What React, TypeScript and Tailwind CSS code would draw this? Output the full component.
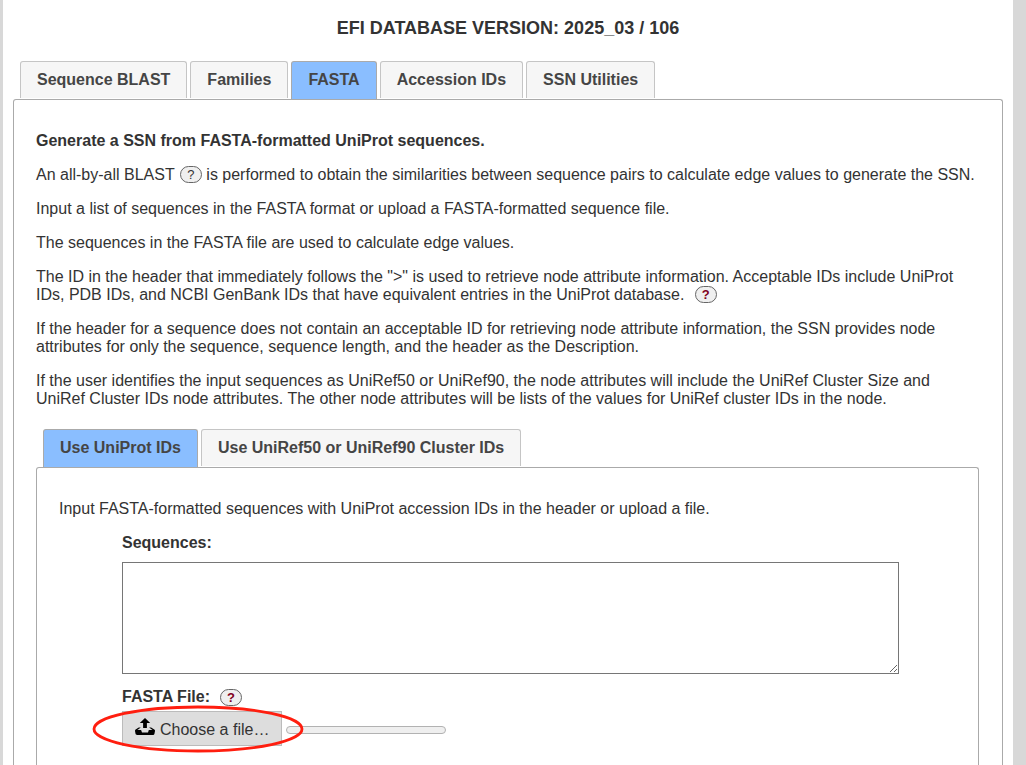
import { useState } from 'react';

const TABS = ['Sequence BLAST', 'Families', 'FASTA', 'Accession IDs', 'SSN Utilities'];
const ID_TABS = ['Use UniProt IDs', 'Use UniRef50 or UniRef90 Cluster IDs'];

interface TabBarProps {
  tabs: string[];
  active: string;
  onSelect: (tab: string) => void;
}

const TabBar = ({ tabs, active, onSelect }: TabBarProps) => (
  <div role="tablist" className="flex gap-[3px] pl-[7px]">
    {tabs.map((tab) => (
      <button
        key={tab}
        type="button"
        role="tab"
        aria-selected={tab === active}
        onClick={() => onSelect(tab)}
        className={`rounded-t-[3px] border border-b-0 px-4 pt-[9px] text-[#454545] font-bold ${
          tab === active ? 'border-[#aaaaaa] bg-[#8abeff] pb-[10px]' : 'mb-px border-[#c5c5c5] bg-[#f6f6f6] pb-[9px]'
        }`}
      >
        {tab}
      </button>
    ))}
  </div>
);

interface HelpProps {
  label: string;
  className: string;
}

const Help = ({ label, className }: HelpProps) => (
  <button
    type="button"
    aria-label={label}
    className={`inline-flex h-[17px] w-[22px] items-center justify-center rounded-full border border-[#666666] bg-[#efefef] align-text-bottom text-[13px] leading-none ${className}`}
  >
    ?
  </button>
);

const App = () => {
  const [tab, setTab] = useState('FASTA');
  const [idTab, setIdTab] = useState('Use UniProt IDs');
  const [sequences, setSequences] = useState('');

  return (
    <div className="min-h-screen bg-[#d8d8d8] pl-[3px] pr-[13px] font-['Liberation_Sans',Arial,sans-serif] text-base leading-[18px] text-[#333333]">
      <main className="flex min-h-screen flex-col bg-white px-[10px] pt-[18px]">
        <h1 className="mb-[23px] text-center text-[18px] leading-5 font-bold">EFI DATABASE VERSION: 2025_03 / 106</h1>

        <TabBar tabs={TABS} active={tab} onSelect={setTab} />

        <section className="flex flex-1 flex-col rounded-t-[3px] border border-b-0 border-[#aaaaaa] pr-[23px] pl-[22px] pt-8">
          <div className="space-y-4">
            <h2 className="font-bold">Generate a SSN from FASTA-formatted UniProt sequences.</h2>
            <p>
              An all-by-all BLAST <Help label="About all-by-all BLAST" className="ml-px text-[#333333]" /> is performed to
              obtain the similarities between sequence pairs to calculate edge values to generate the SSN.
            </p>
            <p>Input a list of sequences in the FASTA format or upload a FASTA-formatted sequence file.</p>
            <p>The sequences in the FASTA file are used to calculate edge values.</p>
            <p>
              The ID in the header that immediately follows the "&gt;" is used to retrieve node attribute information.
              Acceptable IDs include UniProt IDs, PDB IDs, and NCBI GenBank IDs that have equivalent entries in the
              UniProt database. <Help label="About accepted IDs" className="ml-[6px] font-bold text-[#800020]" />
            </p>
            <p>
              If the header for a sequence does not contain an acceptable ID for retrieving node attribute information,
              the SSN provides node attributes for only the sequence, sequence length, and the header as the Description.
            </p>
            <p>
              If the user identifies the input sequences as UniRef50 or UniRef90, the node attributes will include the
              UniRef Cluster Size and UniRef Cluster IDs node attributes. The other node attributes will be lists of the
              values for UniRef cluster IDs in the node.
            </p>
          </div>

          <div className="mt-[21px] flex flex-1 flex-col">
            <TabBar tabs={ID_TABS} active={idTab} onSelect={setIdTab} />

            <div className="flex-1 rounded-t-[3px] border border-b-0 border-[#aaaaaa] px-[22px] pt-8 pb-4">
              <p>Input FASTA-formatted sequences with UniProt accession IDs in the header or upload a file.</p>

              <form className="mt-4 mr-[57px] ml-[63px]" onSubmit={(e) => e.preventDefault()}>
                <label htmlFor="sequences" className="block font-bold">
                  Sequences:
                </label>
                <textarea
                  id="sequences"
                  value={sequences}
                  onChange={(e) => setSequences(e.target.value)}
                  className="mt-[10px] block h-28 w-full border border-[#767676] bg-white p-0.5"
                />

                <div className="mt-[14px] flex items-center gap-[10px]">
                  <label htmlFor="fasta-file" className="font-bold">
                    FASTA File:
                  </label>
                  <Help label="About FASTA file upload" className="font-bold text-[#800020]" />
                </div>

                <div className="mt-[5px] flex items-center gap-1">
                  <div className="relative">
                    <input id="fasta-file" type="file" className="sr-only" />
                    <label
                      htmlFor="fasta-file"
                      className="flex h-[35px] cursor-pointer items-center gap-[5px] border border-[#bbbbbb] bg-[#dddddd] px-3 pt-0.5 whitespace-nowrap"
                    >
                      <svg viewBox="0 0 20 17" className="mb-[6px] h-[17px] w-5 fill-black" aria-hidden="true">
                        <path d="M10 0l-5.2 4.9h3.3v5.1h3.8v-5.1h3.3l-5.2-4.9zm9.3 11.5l-3.2-2.1h-2l3.4 2.6h-3.5c-.1 0-.2.1-.2.1l-.8 2.3h-6l-.8-2.2c-.1-.1-.1-.2-.2-.2h-3.6l3.4-2.6h-2l-3.2 2.1c-.4.3-.7 1-.6 1.5l.6 3.1c.1.5.7.9 1.2.9h16.3c.6 0 1.1-.4 1.3-.9l.6-3.1c.1-.5-.2-1.2-.7-1.5z" />
                      </svg>
                      <span>Choose a file…</span>
                    </label>
                    {/* red highlight ring around the upload button */}
                    <svg
                      viewBox="0 0 212 48"
                      className="pointer-events-none absolute -top-[6px] -left-[30px] h-12 w-[212px] max-w-none fill-none stroke-[#ff1e0f]"
                      aria-hidden="true"
                    >
                      <ellipse cx="106" cy="24" rx="104" ry="22" strokeWidth="2.800" />
                    </svg>
                  </div>
                  <div
                    role="progressbar"
                    aria-label="Upload progress"
                    aria-valuenow={0}
                    className="mt-0.5 h-2 w-40 rounded-full border border-[#b2b2b2] bg-[#efefef]"
                  />
                </div>
              </form>
            </div>
          </div>
        </section>
      </main>
    </div>
  );
};

export default App;
